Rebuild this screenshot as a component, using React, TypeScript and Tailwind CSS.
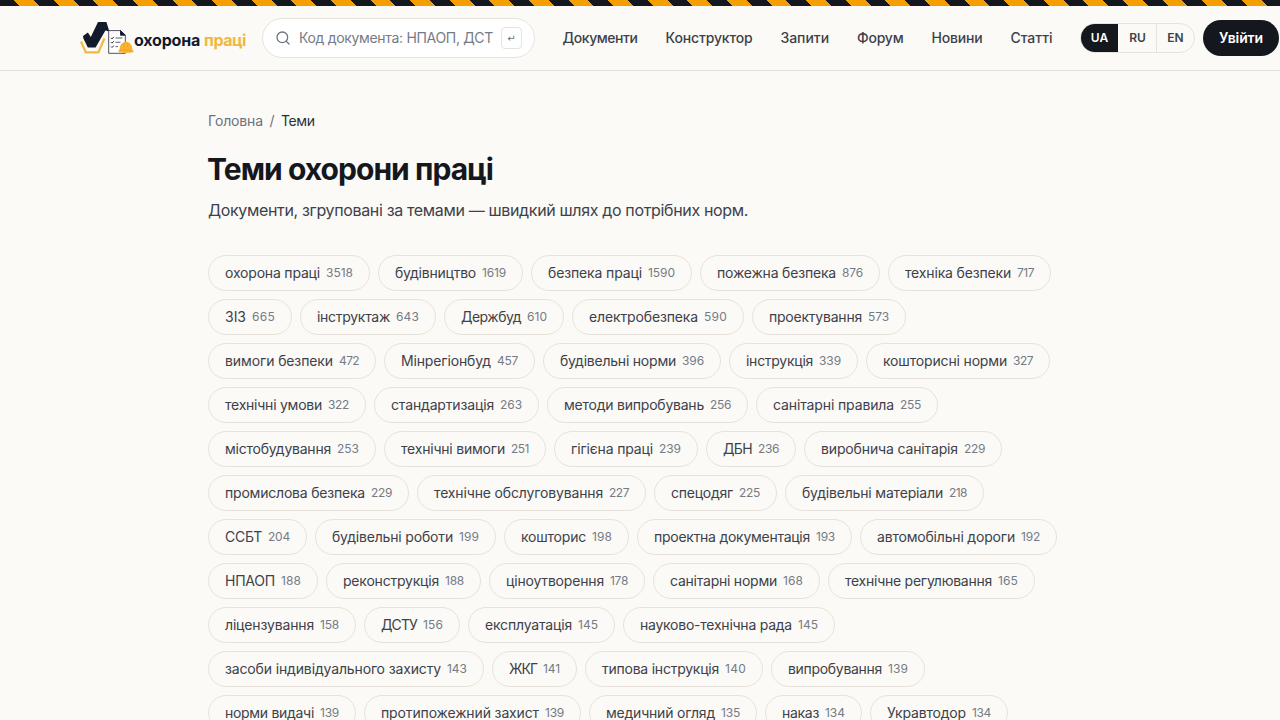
import React, { useLayoutEffect, useRef, useState } from 'react';
import { Search } from 'lucide-react';

interface FitTextProps {
  text: string;
  width: number;
  className?: string;
}

interface Tag {
  label: string;
  count: number;
  labelWidth: number;
  countWidth: number;
}

// Spreads or tightens the letters so that the text takes the given width
const FitText: React.FC<FitTextProps> = ({ text, width, className }) => {
  const ref = useRef<HTMLSpanElement>(null);
  const [spacing, setSpacing] = useState<number>(0);

  useLayoutEffect(() => {
    if (!ref.current) return;
    const natural = ref.current.getBoundingClientRect().width;
    setSpacing((width - natural) / text.length);
  }, [text, width]);

  return (
    <span className={`block shrink-0 whitespace-nowrap ${className || ''}`} style={{ width }}>
      <span ref={ref} style={{ letterSpacing: spacing }}>{text}</span>
    </span>
  );
};

const navItems = [
  { label: 'Документи', width: 75 },
  { label: 'Конструктор', width: 87 },
  { label: 'Запити', width: 48.5 },
  { label: 'Форум', width: 46.5 },
  { label: 'Новини', width: 51 },
  { label: 'Статті', width: 42 },
];

const tags: Tag[] = [
  { label: 'охорона праці', count: 3518, labelWidth: 95, countWidth: 27 },
  { label: 'будівництво', count: 1619, labelWidth: 81, countWidth: 24 },
  { label: 'безпека праці', count: 1590, labelWidth: 94, countWidth: 27 },
  { label: 'пожежна безпека', count: 876, labelWidth: 119, countWidth: 21 },
  { label: 'техніка безпеки', count: 717, labelWidth: 106, countWidth: 17 },
  { label: 'ЗІЗ', count: 665, labelWidth: 21, countWidth: 23 },
  { label: 'інструктаж', count: 643, labelWidth: 73, countWidth: 23 },
  { label: 'Держбуд', count: 610, labelWidth: 60, countWidth: 20 },
  { label: 'електробезпека', count: 590, labelWidth: 109, countWidth: 23 },
  { label: 'проектування', count: 573, labelWidth: 93, countWidth: 21 },
  { label: 'вимоги безпеки', count: 472, labelWidth: 108, countWidth: 20 },
  { label: 'Мінрегіонбуд', count: 457, labelWidth: 90, countWidth: 21 },
  { label: 'будівельні норми', count: 396, labelWidth: 116, countWidth: 22 },
  { label: 'інструкція', count: 339, labelWidth: 67, countWidth: 22 },
  { label: 'кошторисні норми', count: 327, labelWidth: 124, countWidth: 20 },
  { label: 'технічні умови', count: 322, labelWidth: 97, countWidth: 21 },
  { label: 'стандартизація', count: 263, labelWidth: 103, countWidth: 22 },
  { label: 'методи випробувань', count: 256, labelWidth: 140, countWidth: 21 },
  { label: 'санітарні правила', count: 255, labelWidth: 121, countWidth: 21 },
  { label: 'містобудування', count: 253, labelWidth: 106, countWidth: 22 },
  { label: 'технічні вимоги', count: 251, labelWidth: 104, countWidth: 18 },
  { label: 'гігієна праці', count: 239, labelWidth: 82, countWidth: 22 },
  { label: 'ДБН', count: 236, labelWidth: 29, countWidth: 21 },
  { label: 'виробнича санітарія', count: 229, labelWidth: 137, countWidth: 21 },
  { label: 'промислова безпека', count: 229, labelWidth: 140, countWidth: 21 },
  { label: 'технічне обслуговування', count: 227, labelWidth: 169, countWidth: 20 },
  { label: 'спецодяг', count: 225, labelWidth: 62, countWidth: 21 },
  { label: 'будівельні матеріали', count: 218, labelWidth: 141, countWidth: 18 },
  { label: 'ССБТ', count: 204, labelWidth: 37, countWidth: 22 },
  { label: 'будівельні роботи', count: 199, labelWidth: 121, countWidth: 20 },
  { label: 'кошторис', count: 198, labelWidth: 65, countWidth: 20 },
  { label: 'проектна документація', count: 193, labelWidth: 156, countWidth: 19 },
  { label: 'автомобільні дороги', count: 192, labelWidth: 138, countWidth: 19 },
  { label: 'НПАОП', count: 188, labelWidth: 50, countWidth: 20 },
  { label: 'реконструкція', count: 188, labelWidth: 96, countWidth: 19 },
  { label: 'ціноутворення', count: 178, labelWidth: 98, countWidth: 18 },
  { label: 'санітарні норми', count: 168, labelWidth: 107, countWidth: 20 },
  { label: 'технічне регулювання', count: 165, labelWidth: 147, countWidth: 20 },
  { label: 'ліцензування', count: 158, labelWidth: 89, countWidth: 19 },
  { label: 'ДСТУ', count: 156, labelWidth: 36, countWidth: 20 },
  { label: 'експлуатація', count: 145, labelWidth: 87, countWidth: 20 },
  { label: 'науково-технічна рада', count: 145, labelWidth: 152, countWidth: 20 },
  { label: 'засоби індивідуального захисту', count: 143, labelWidth: 216, countWidth: 20 },
  { label: 'ЖКГ', count: 141, labelWidth: 28, countWidth: 17 },
  { label: 'типова інструкція', count: 140, labelWidth: 117, countWidth: 21 },
  { label: 'випробування', count: 139, labelWidth: 94, countWidth: 20 },
  { label: 'норми видачі', count: 139, labelWidth: 89, countWidth: 19 },
  { label: 'протипожежний захист', count: 139, labelWidth: 158, countWidth: 19 },
  { label: 'медичний огляд', count: 135, labelWidth: 109, countWidth: 19 },
  { label: 'наказ', count: 134, labelWidth: 37, countWidth: 20 },
  { label: 'Укравтодор', count: 134, labelWidth: 79, countWidth: 19 },
];

const LogoMark: React.FC = () => (
  <svg width="54" height="32" viewBox="0 0 54 32" className="shrink-0">
    {/* amber chevron under the tick */}
    <path d="M1 19.5 L5.8 30.4 H18.4 L24.4 16.5" fill="none" stroke="#f5b83d" strokeWidth="2.2" />
    {/* tick */}
    <path
      d="M3 14 L7.9 10.5 L10.8 15 L18 0 H26.4 L29.4 9.6 L25.4 8.6 L15.6 25.4 H7.8 L3.4 16.5 Z"
      fill="#121a2b"
    />
    {/* checklist */}
    <path d="M28.7 8.6 H40.5 L45.3 13.2 V31.3 H28.7 Z" fill="#fff" stroke="#39404d" strokeWidth="0.9" />
    <path d="M40.5 8.5 V13.2 H45.3 Z" fill="#121a2b" stroke="#121a2b" strokeWidth="0.9" />
    <path
      d="M31 15.9 l1 1 l1.8-2 M31 20.2 l1 1 l1.8-2 M31 24.5 l1 1 l1.8-2"
      fill="none"
      stroke="#121a2b"
      strokeWidth="0.9"
    />
    <path d="M35.5 16 H42.5 M35.5 20.3 H40.5 M35.5 24.6 H38" stroke="#4b5260" strokeWidth="0.9" />
    {/* helmet */}
    <path
      d="M39.5 27.5 C39.5 23.5 41.5 21 44 20.2 L46 19.6 L48 20.2 C50.8 21.3 52.3 24 52.3 27.5 L54 30 Q46 32.4 38 29.5 Z"
      fill="#f9b233"
    />
    <path
      d="M43.8 20.8 L44.3 25 M47.7 20.8 V25 M39.5 28.2 Q46 27 52.5 29"
      fill="none"
      stroke="#e59a1c"
      strokeWidth="0.6"
    />
  </svg>
);

const Header: React.FC = () => (
  <header className="h-[71px] border-b border-[#e7e3dc]">
    <div className="h-1.5 bg-[repeating-linear-gradient(45deg,#15171e_0_14px,#f59e00_14px_28px)]" />
    <div className="flex h-16 items-center pl-20">
      <a href="#" className="flex h-8 w-[166px] shrink-0 items-center">
        <LogoMark />
        <span className="flex items-center gap-1 pt-1 text-[16px] font-bold leading-5">
          <FitText text="охорона" width={66} className="text-[#121a2b]" />
          <FitText text="праці" width={42} className="text-[#f0b840]" />
        </span>
      </a>

      <div className="ml-4 flex h-10 w-[273px] shrink-0 items-center rounded-full border border-[#e7e3dc] bg-white pl-3 pr-3">
        <Search size={16} strokeWidth={1.9} className="shrink-0 text-[#6b7280]" />
        <FitText text="Код документа: НПАОП, ДСТ" width={194} className="ml-2 text-sm text-[#757b86]" />
        <kbd className="ml-2 flex h-[22px] w-[21px] shrink-0 items-center justify-center rounded border border-[#e7e3dc] font-['DejaVu_Sans',sans-serif] text-[10px] text-[#6b7280]">
          ↵
        </kbd>
      </div>

      <nav className="ml-[27.5px] flex shrink-0 gap-7 text-sm font-medium text-[#3d414b]">
        {navItems.map(item => (
          <a key={item.label} href="#">
            <FitText text={item.label} width={item.width} />
          </a>
        ))}
      </nav>

      <div className="ml-[27.5px] flex h-[30px] w-[115px] shrink-0 overflow-hidden rounded-full border border-[#e7e3dc] text-xs font-semibold text-[#3d414b]">
        <button className="w-[37px] bg-[#15171e] text-white">UA</button>
        <button className="w-[38px] pl-px">RU</button>
        <button className="w-[38px] border-l border-[#e7e3dc]">EN</button>
      </div>
      <button className="ml-2 flex h-9 w-[76px] shrink-0 items-center justify-center rounded-full bg-[#15171e] text-sm font-semibold text-white">
        <FitText text="Увійти" width={44} />
      </button>
    </div>
  </header>
);

const App: React.FC = () => {
  return (
    <div className="h-screen overflow-hidden bg-[#fbfaf6] font-['Inter','Noto_Sans',sans-serif]">
      <Header />
      <main className="mx-auto max-w-4xl px-4 pt-10">
        <div className="flex gap-[6.5px] text-sm text-[#6b7280]">
          <FitText text="Головна" width={55} />
          <span>/</span>
          <FitText text="Теми" width={33.5} className="text-[#2b2f38]" />
        </div>
        <h1 className="mt-5 text-[30px] font-bold leading-[36px] text-[#15171e]">
          <FitText text="Теми охорони праці" width={286} className="-ml-px" />
        </h1>
        <p className="mt-[11px] text-base leading-6 text-[#3d414b]">
          <FitText text="Документи, згруповані за темами — швидкий шлях до потрібних норм." width={540} />
        </p>

        <div className="mt-[33px] flex flex-wrap gap-2">
          {tags.map(tag => (
            <a
              key={tag.label}
              href="#"
              className="flex h-9 items-center gap-1.5 rounded-full border border-[#e7e3dc] px-4 text-sm text-[#3d414b]"
            >
              <FitText text={tag.label} width={tag.labelWidth} />
              <FitText text={String(tag.count)} width={tag.countWidth} className="text-xs text-[#757b86]" />
            </a>
          ))}
        </div>
      </main>
    </div>
  );
};

export default App;
